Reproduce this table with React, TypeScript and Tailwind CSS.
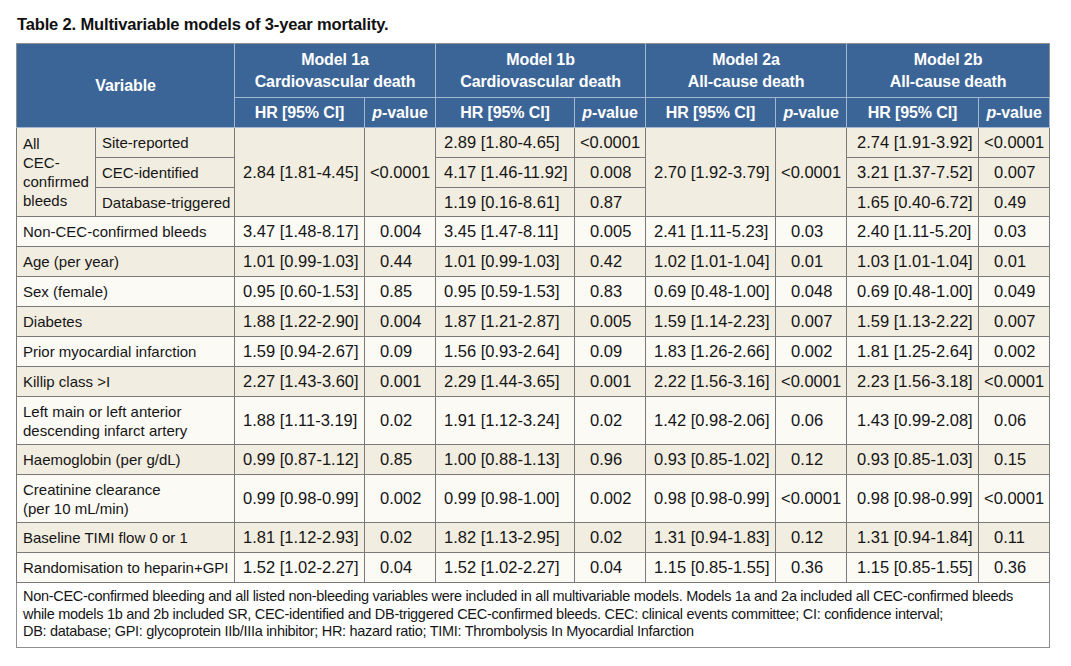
import React from "react";

const SANS = "font-['Liberation_Sans',Arial,sans-serif]";

const BEIGE = "bg-[#f1ede0]";
const WHITE = "bg-[#fbfaf5]";

const rows: string[][] = [
  ["Non-CEC-confirmed bleeds", "3.47 [1.48-8.17]", "0.004", "3.45 [1.47-8.11]", "0.005", "2.41 [1.11-5.23]", "0.03", "2.40 [1.11-5.20]", "0.03"],
  ["Age (per year)", "1.01 [0.99-1.03]", "0.44", "1.01 [0.99-1.03]", "0.42", "1.02 [1.01-1.04]", "0.01", "1.03 [1.01-1.04]", "0.01"],
  ["Sex (female)", "0.95 [0.60-1.53]", "0.85", "0.95 [0.59-1.53]", "0.83", "0.69 [0.48-1.00]", "0.048", "0.69 [0.48-1.00]", "0.049"],
  ["Diabetes", "1.88 [1.22-2.90]", "0.004", "1.87 [1.21-2.87]", "0.005", "1.59 [1.14-2.23]", "0.007", "1.59 [1.13-2.22]", "0.007"],
  ["Prior myocardial infarction", "1.59 [0.94-2.67]", "0.09", "1.56 [0.93-2.64]", "0.09", "1.83 [1.26-2.66]", "0.002", "1.81 [1.25-2.64]", "0.002"],
  ["Killip class >I", "2.27 [1.43-3.60]", "0.001", "2.29 [1.44-3.65]", "0.001", "2.22 [1.56-3.16]", "<0.0001", "2.23 [1.56-3.18]", "<0.0001"],
  ["Left main or left anterior\ndescending infarct artery", "1.88 [1.11-3.19]", "0.02", "1.91 [1.12-3.24]", "0.02", "1.42 [0.98-2.06]", "0.06", "1.43 [0.99-2.08]", "0.06"],
  ["Haemoglobin (per g/dL)", "0.99 [0.87-1.12]", "0.85", "1.00 [0.88-1.13]", "0.96", "0.93 [0.85-1.02]", "0.12", "0.93 [0.85-1.03]", "0.15"],
  ["Creatinine clearance\n(per 10 mL/min)", "0.99 [0.98-0.99]", "0.002", "0.99 [0.98-1.00]", "0.002", "0.98 [0.98-0.99]", "<0.0001", "0.98 [0.98-0.99]", "<0.0001"],
  ["Baseline TIMI flow 0 or 1", "1.81 [1.12-2.93]", "0.02", "1.82 [1.13-2.95]", "0.02", "1.31 [0.94-1.83]", "0.12", "1.31 [0.94-1.84]", "0.11"],
  ["Randomisation to heparin+GPI", "1.52 [1.02-2.27]", "0.04", "1.52 [1.02-2.27]", "0.04", "1.15 [0.85-1.55]", "0.36", "1.15 [0.85-1.55]", "0.36"],
];

const bd = "border border-[#7a7a7a]";
const hd = `border border-[#a3b7d1] bg-[#3c6597] text-white font-bold text-[16px] tracking-[-0.1px] text-center align-middle p-0 whitespace-nowrap ${SANS}`;
const txt = `${bd} ${SANS} text-[15px] leading-[19px] text-[#151515] pl-[6px] pr-[2px] py-0 align-middle whitespace-pre-line`;
const num = (last: boolean) =>
  `${bd} ${SANS} text-[16.5px] leading-[19px] text-[#151515] ${last ? "pl-[10px]" : "pl-[8px]"} pr-0 py-0 align-middle whitespace-nowrap`;
const pv = (v: string) =>
  `${bd} ${SANS} text-[16.5px] leading-[19px] text-[#151515] align-middle whitespace-nowrap py-0 ${
    v.startsWith("<") ? "text-center px-0" : "pl-[15px] pr-0"
  }`;

function PHead() {
  return (
    <th className={hd}>
      <i>p</i>-value
    </th>
  );
}

export default function App() {
  return (
    <div className="w-[1071px] h-[666px] bg-white pt-[14px] pl-[16px]">
      <div className={`${SANS} font-bold text-[16.5px] tracking-[-0.15px] leading-[20px] text-[#111] ml-[1px] mb-[9px]`}>
        Table 2. Multivariable models of 3-year mortality.
      </div>
      <table className="table-fixed border-collapse w-[1033px] border border-[#8f8f8f]">
        <colgroup>
          <col className="w-[79px]" />
          <col className="w-[139px]" />
          <col className="w-[130px]" />
          <col className="w-[71px]" />
          <col className="w-[139px]" />
          <col className="w-[71px]" />
          <col className="w-[130px]" />
          <col className="w-[71px]" />
          <col className="w-[132px]" />
          <col className="w-[71px]" />
        </colgroup>
        <thead>
          <tr className="h-[54px]">
            <th colSpan={2} rowSpan={2} className={hd + " border-t-[#8f8f8f] border-l-[#8f8f8f]"}>
              Variable
            </th>
            <th colSpan={2} className={hd + " leading-[22px] border-t-[#8f8f8f]"}>
              Model 1a
              <br />
              Cardiovascular death
            </th>
            <th colSpan={2} className={hd + " leading-[22px] border-t-[#8f8f8f]"}>
              Model 1b
              <br />
              Cardiovascular death
            </th>
            <th colSpan={2} className={hd + " leading-[22px] border-t-[#8f8f8f]"}>
              Model 2a
              <br />
              All-cause death
            </th>
            <th colSpan={2} className={hd + " leading-[22px] border-t-[#8f8f8f] border-r-[#8f8f8f]"}>
              Model 2b
              <br />
              All-cause death
            </th>
          </tr>
          <tr className="h-[30px]">
            <th className={hd}>HR [95% CI]</th>
            <PHead />
            <th className={hd}>HR [95% CI]</th>
            <PHead />
            <th className={hd}>HR [95% CI]</th>
            <PHead />
            <th className={hd}>HR [95% CI]</th>
            <PHead />
          </tr>
        </thead>
        <tbody>
          <tr className={`h-[30px] ${BEIGE}`}>
            <td rowSpan={3} className={txt + " leading-[18.5px]"}>
              All
              <br />
              CEC-
              <br />
              confirmed
              <br />
              bleeds
            </td>
            <td className={txt}>Site-reported</td>
            <td rowSpan={3} className={num(false)}>2.84 [1.81-4.45]</td>
            <td rowSpan={3} className={pv("<0.0001")}>&lt;0.0001</td>
            <td className={num(false)}>2.89 [1.80-4.65]</td>
            <td className={pv("<0.0001")}>&lt;0.0001</td>
            <td rowSpan={3} className={num(false)}>2.70 [1.92-3.79]</td>
            <td rowSpan={3} className={pv("<0.0001")}>&lt;0.0001</td>
            <td className={num(true)}>2.74 [1.91-3.92]</td>
            <td className={pv("<0.0001")}>&lt;0.0001</td>
          </tr>
          <tr className={`h-[30px] ${BEIGE}`}>
            <td className={txt}>CEC-identified</td>
            <td className={num(false)}>4.17 [1.46-11.92]</td>
            <td className={pv("0.008")}>0.008</td>
            <td className={num(true)}>3.21 [1.37-7.52]</td>
            <td className={pv("0.007")}>0.007</td>
          </tr>
          <tr className={`h-[29px] ${BEIGE}`}>
            <td className={txt}>Database-triggered</td>
            <td className={num(false)}>1.19 [0.16-8.61]</td>
            <td className={pv("0.87")}>0.87</td>
            <td className={num(true)}>1.65 [0.40-6.72]</td>
            <td className={pv("0.49")}>0.49</td>
          </tr>
          {rows.map((r, i) => {
            const two = r[0].includes("\n");
            return (
              <tr key={i} className={`${two ? "h-[48px]" : "h-[30px]"} ${i % 2 === 0 ? WHITE : BEIGE}`}>
                <td colSpan={2} className={txt}>
                  {r[0]}
                </td>
                <td className={num(false)}>{r[1]}</td>
                <td className={pv(r[2])}>{r[2]}</td>
                <td className={num(false)}>{r[3]}</td>
                <td className={pv(r[4])}>{r[4]}</td>
                <td className={num(false)}>{r[5]}</td>
                <td className={pv(r[6])}>{r[6]}</td>
                <td className={num(true)}>{r[7]}</td>
                <td className={pv(r[8])}>{r[8]}</td>
              </tr>
            );
          })}
          <tr className="bg-white">
            <td
              colSpan={10}
              className={`border border-[#8f8f8f] ${SANS} text-[14.5px] tracking-[-0.3px] leading-[17.5px] text-[#151515] pl-[6px] pr-[4px] pt-[5px] pb-[6px] align-top whitespace-nowrap`}
            >
              Non-CEC-confirmed bleeding and all listed non-bleeding variables were included in all multivariable models. Models 1a and 2a included all CEC-confirmed bleeds
              <br />
              while models 1b and 2b included SR, CEC-identified and DB-triggered CEC-confirmed bleeds. CEC: clinical events committee; CI: confidence interval;
              <br />
              DB: database; GPI: glycoprotein IIb/IIIa inhibitor; HR: hazard ratio; TIMI: Thrombolysis In Myocardial Infarction
            </td>
          </tr>
        </tbody>
      </table>
    </div>
  );
}
